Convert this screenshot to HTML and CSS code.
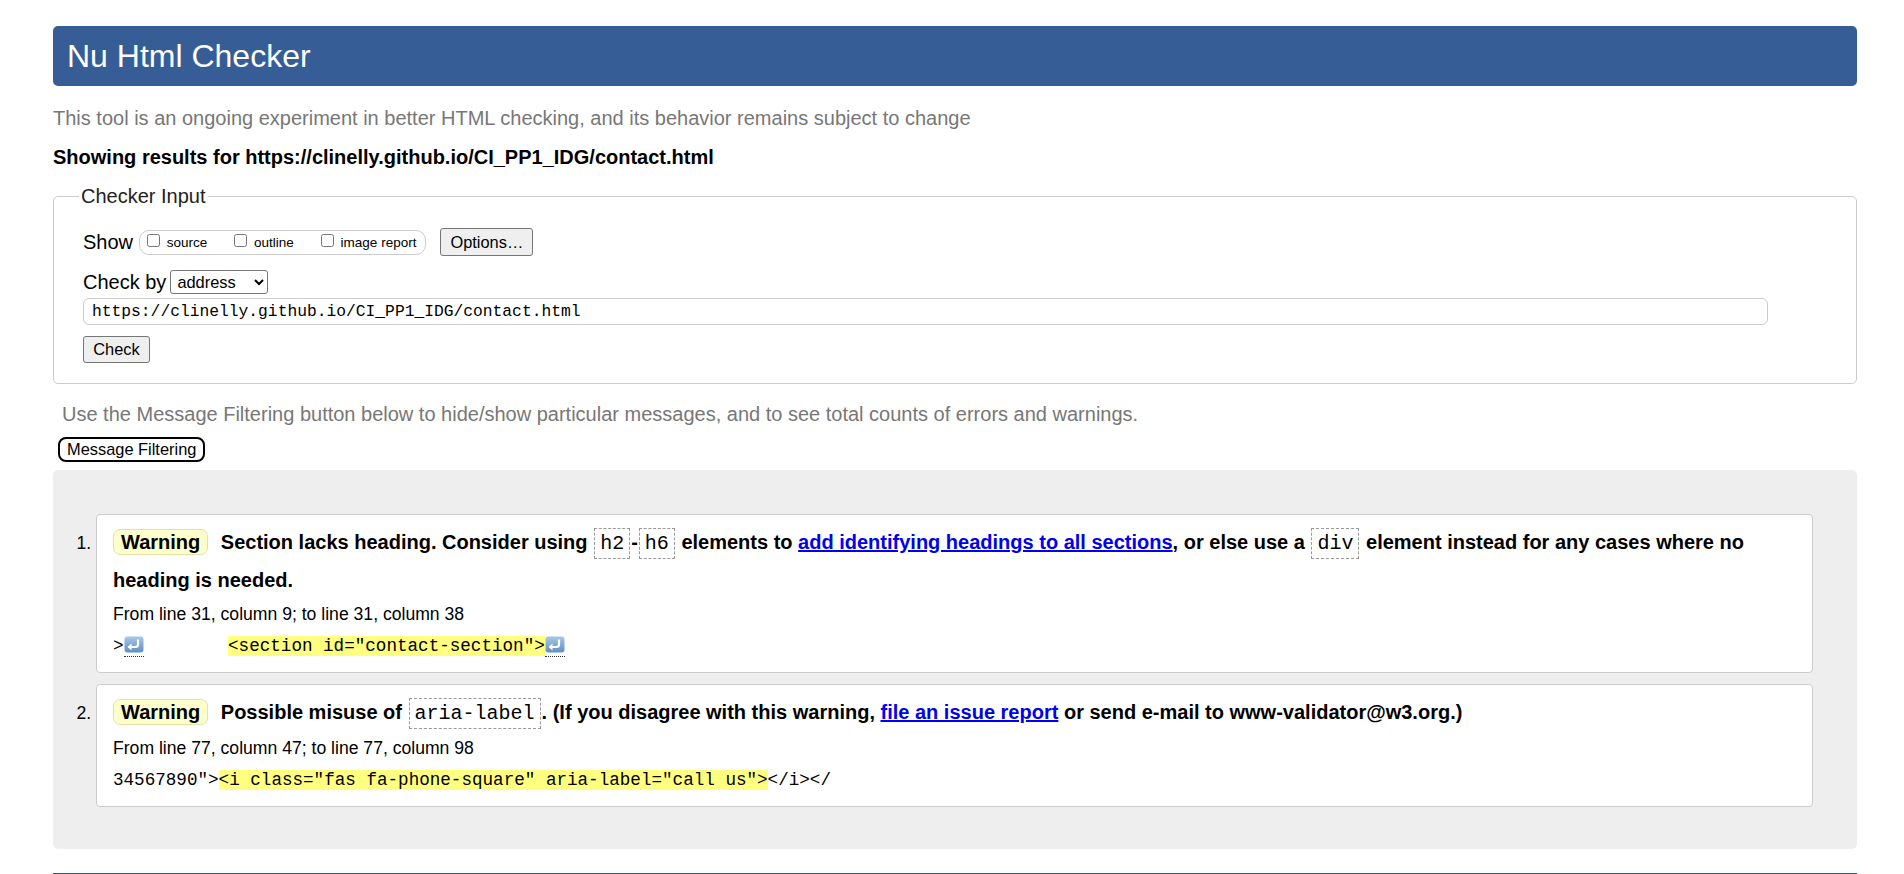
FILE: index.html
```html
<!DOCTYPE html>
<html lang="en">
<head>
<meta charset="utf-8">
<title>Nu Html Checker</title>
<link rel="stylesheet" href="styles.css">
</head>
<body>
<h1 class="title">Nu Html Checker</h1>
<p class="intro">This tool is an ongoing experiment in better HTML checking, and its behavior remains subject to change</p>
<p class="showing">Showing results for https://clinelly.github.io/CI_PP1_IDG/contact.html</p>
<form class="checker">
  <fieldset class="inputs">
    <legend class="legend">Checker Input</legend>
    <div class="row row-show">
      <span class="row-label">Show</span>
      <span class="show-group"><label class="opt"><input type="checkbox"> source</label><label class="opt"><input type="checkbox"> outline</label><label class="opt"><input type="checkbox"> image report</label></span>
      <button type="button" class="btn btn-options">Options…</button>
    </div>
    <div class="row row-by">
      <span class="row-label by-label">Check by</span>
      <select class="sel"><option>address</option></select>
    </div>
    <input class="url" type="text" value="https://clinelly.github.io/CI_PP1_IDG/contact.html">
    <div class="row row-check"><button type="button" class="btn btn-check">Check</button></div>
  </fieldset>
</form>
<p class="filter-note">Use the Message Filtering button below to hide/show particular messages, and to see total counts of errors and warnings.</p>
<button type="button" class="btn-filter">Message Filtering</button>
<div class="results">
  <ol class="messages">
    <li class="msg">
      <p class="msg-text"><span class="badge">Warning</span> Section lacks heading. Consider using <code class="kw">h2</code>-<code class="kw">h6</code> elements to <a class="link" href="#">add identifying headings to all sections</a>, or else use a <code class="kw">div</code> element instead for any cases where no heading is needed.</p>
      <p class="loc">From line 31, column 9; to line 31, column 38</p>
      <p class="extract">&gt;<span class="lf"><svg class="lf-icon" width="20" height="17" viewBox="0 0 20 17"><defs><linearGradient id="g1" x1="0" y1="0" x2="0" y2="1"><stop offset="0" stop-color="#a9c8e8"/><stop offset="1" stop-color="#5d8fc4"/></linearGradient></defs><rect x="0.5" y="0.5" width="19" height="16" rx="3" fill="url(#g1)"/><path d="M14 3.5 V8.5 Q14 11 11.5 11 H7" fill="none" stroke="#fff" stroke-width="2.2"/><path d="M7.5 7.5 L3.5 11 L7.5 14.5 Z" fill="#fff"/></svg></span>        <mark class="hl">&lt;section id="contact-section"&gt;</mark><span class="lf"><svg class="lf-icon" width="20" height="17" viewBox="0 0 20 17"><defs><linearGradient id="g2" x1="0" y1="0" x2="0" y2="1"><stop offset="0" stop-color="#a9c8e8"/><stop offset="1" stop-color="#5d8fc4"/></linearGradient></defs><rect x="0.5" y="0.5" width="19" height="16" rx="3" fill="url(#g2)"/><path d="M14 3.5 V8.5 Q14 11 11.5 11 H7" fill="none" stroke="#fff" stroke-width="2.2"/><path d="M7.5 7.5 L3.5 11 L7.5 14.5 Z" fill="#fff"/></svg></span></p>
    </li>
    <li class="msg">
      <p class="msg-text"><span class="badge">Warning</span> Possible misuse of <code class="kw">aria-label</code>. (If you disagree with this warning, <a class="link" href="#">file an issue report</a> or send e-mail to www-validator@w3.org.)</p>
      <p class="loc loc-2">From line 77, column 47; to line 77, column 98</p>
      <p class="extract">34567890"&gt;<mark class="hl">&lt;i class="fas fa-phone-square" aria-label="call us"&gt;</mark>&lt;/i&gt;&lt;/</p>
    </li>
  </ol>
</div>
<div class="footer-line"></div>
</body>
</html>
```

FILE: styles.css
```css
* {
  box-sizing: border-box;
}

body {
  margin: 0;
  padding: 26px 47px 0 53px;
  font-family: "Liberation Sans", Arial, sans-serif;
  color: #000;
  background: #fff;
}

.title {
  margin: 0;
  height: 60px;
  line-height: 60px;
  padding-left: 14px;
  font-size: 32px;
  font-weight: normal;
  color: #fff;
  background: #365d95;
  border-radius: 5px;
}

.intro {
  margin: 20px 0 0;
  font-size: 20px;
  line-height: 24px;
  color: #777;
}

.showing {
  margin: 15px 0 0;
  font-size: 20px;
  line-height: 24px;
  font-weight: bold;
}

.checker {
  margin: 15px 0 0;
}

.inputs {
  margin: 0;
  min-width: 0;
  border: 1px solid #ccc;
  border-radius: 5px;
  padding: 20px 29px 20px 29px;
}

.legend {
  margin-left: -4px;
  padding: 0 2px;
  font-size: 20px;
  line-height: 24px;
  color: #222;
}

.row {
  display: flex;
  align-items: center;
}

.row-show {
  height: 28px;
}

.row-label {
  font-size: 20px;
  line-height: 24px;
  margin-right: 6px;
}

.by-label {
  margin-right: 4px;
}

.show-group {
  display: inline-flex;
  height: 25px;
  border: 1px solid #ccc;
  border-radius: 10px;
  padding: 0 9px 0 3px;
  font-size: 13.5px;
  line-height: 23px;
}

.opt {
  display: block;
  white-space: nowrap;
}

.opt + .opt {
  margin-left: 23px;
}

.opt input {
  margin: 3px 3px 3px 4px;
  width: 13px;
  height: 13px;
}

.btn {
  font-family: "Liberation Sans", Arial, sans-serif;
  font-size: 16.4px;
  color: #000;
  background: #efefef;
  border: 1px solid #767676;
  border-radius: 3px;
  padding: 0 9px;
}

.btn-options {
  height: 28px;
  margin-left: 14px;
}

.row-by {
  height: 24px;
  margin-top: 14px;
}

.sel {
  height: 24px;
  width: 98px;
  font-family: "Liberation Sans", Arial, sans-serif;
  font-size: 16.4px;
  color: #000;
  background: #fff;
  border: 1px solid #767676;
  border-radius: 3px;
  padding: 0 2px;
}

.url {
  display: block;
  margin-top: 4px;
  width: calc(100% - 59px);
  height: 27px;
  border: 1px solid #ccc;
  border-radius: 6px;
  padding: 0 8px;
  font-family: "Liberation Mono", "Courier New", monospace;
  font-size: 16.3px;
  color: #000;
}

.row-check {
  margin-top: 11px;
}

.btn-check {
  height: 27px;
  width: 67px;
}

.filter-note {
  margin: 18px 0 0 9px;
  font-size: 20px;
  line-height: 24px;
  color: #777;
}

.btn-filter {
  display: block;
  margin: 11px 0 0 5px;
  height: 25px;
  padding: 0 7px;
  border: 2px solid #000;
  border-radius: 8px;
  background: #fff;
  color: #000;
  font-family: "Liberation Sans", Arial, sans-serif;
  font-size: 16.4px;
}

.results {
  margin-top: 8px;
  background: #eee;
  border-radius: 5px;
  padding: 44px 44px 42px 43px;
}

.messages {
  margin: 0;
  padding: 0;
  list-style: decimal outside;
}

.msg {
  background: #fff;
  border: 1px solid #ccc;
  border-radius: 4px;
  padding: 8px 16px 13px;
  font-size: 17.6px;
}

.msg + .msg {
  margin-top: 11px;
}

.msg-text {
  margin: 0;
  font-size: 20px;
  line-height: 38px;
  font-weight: bold;
}

.badge {
  display: inline-block;
  background: #ffffcc;
  border: 1px solid #e2e2a8;
  border-radius: 7px;
  padding: 0 7px;
  line-height: 24px;
  margin-right: 7px;
}

.kw {
  font-family: "Liberation Mono", "Courier New", monospace;
  font-size: 20px;
  line-height: 1;
  font-weight: normal;
  border: 1px dashed #999;
  padding: 3px 5px;
  margin: 0 1px;
}

.link {
  color: #0000ee;
  text-decoration: underline;
}

.loc {
  margin: 2px 0 0;
  font-size: 17.6px;
  line-height: 26px;
}

.loc-2 {
  margin-top: 4px;
}

.extract {
  margin: 6px 0 0;
  font-family: "Liberation Mono", "Courier New", monospace;
  font-size: 17.6px;
  line-height: 26px;
  white-space: pre;
}

.hl {
  background: #ffff80;
  color: #000;
}

.lf {
  border-bottom: 1px dotted #333;
}

.lf-icon {
  vertical-align: -2px;
}

.footer-line {
  margin-top: 24px;
  border-top: 2px solid #3a5580;
}
```
